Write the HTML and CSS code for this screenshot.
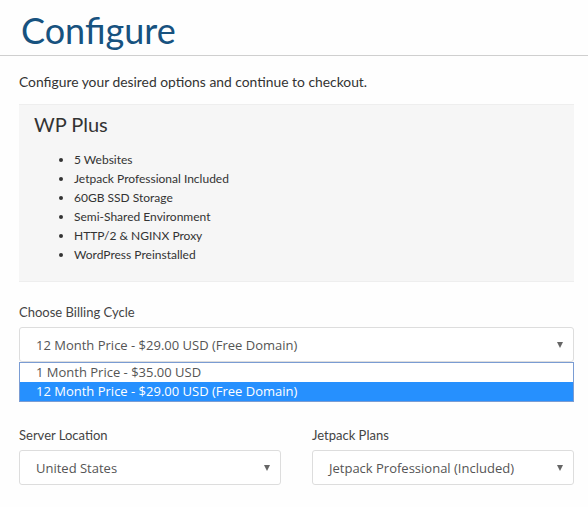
FILE: index.html
```html
<!DOCTYPE html>
<html>
<head>
<meta charset="utf-8">
<link rel="stylesheet" href="styles.css">
</head>
<body>
<div class="header">
  <h1 class="title">Configure</h1>
</div>
<div class="page">
  <p class="intro">Configure your desired options and continue to checkout.</p>
  <div class="product">
    <h2 class="product-name">WP Plus</h2>
    <ul class="features">
      <li>5 Websites</li>
      <li>Jetpack Professional Included</li>
      <li>60GB SSD Storage</li>
      <li>Semi-Shared Environment</li>
      <li>HTTP/2 &amp; NGINX Proxy</li>
      <li>WordPress Preinstalled</li>
    </ul>
  </div>

  <div class="field billing">
    <label class="label">Choose Billing Cycle</label>
    <div class="select-wrap">
      <div class="select">
        <span>12 Month Price - $29.00 USD (Free Domain)</span>
        <span class="arrow"></span>
      </div>
      <ul class="dropdown">
        <li class="opt">1 Month Price - $35.00 USD</li>
        <li class="opt active">12 Month Price - $29.00 USD (Free Domain)</li>
      </ul>
    </div>
  </div>

  <div class="row">
    <div class="field">
      <label class="label">Server Location</label>
      <div class="select">
        <span>United States</span>
        <span class="arrow"></span>
      </div>
    </div>
    <div class="field">
      <label class="label">Jetpack Plans</label>
      <div class="select">
        <span>Jetpack Professional (Included)</span>
        <span class="arrow"></span>
      </div>
    </div>
  </div>
</div>
</body>
</html>
```

FILE: styles.css
```css
html, body {
  margin: 0;
  padding: 0;
  background: #fefefe;
}
body {
  font-family: Lato, "Open Sans", sans-serif;
  color: #333;
}
.header {
  padding-left: 21px;
  border-bottom: 1px solid #cfcfcf;
  height: 55px;
}
.title {
  margin: 0;
  padding-top: 8px;
  font-size: 36px;
  font-weight: 400;
  line-height: 44px;
  color: #17527f;
}
.page {
  width: 555px;
  padding-left: 19px;
}
.intro {
  margin: 16px 0 0;
  font-size: 13.85px;
  line-height: 20px;
  color: #333;
}
.product {
  margin-top: 12px;
  height: 176px;
  background: #f6f6f6;
  border-top: 1px solid #eeeeee;
  border-bottom: 1px solid #eeeeee;
  padding: 0 15px;
}
.product-name {
  margin: 0;
  padding-top: 7px;
  font-size: 20px;
  font-weight: 400;
  line-height: 24px;
  color: #333;
}
.features {
  margin: 14px 0 0;
  padding-left: 40px;
  font-size: 12px;
  line-height: 19px;
  color: #333;
}
.field {
  display: flex;
  flex-direction: column;
}
.label {
  font-size: 13px;
  line-height: 18px;
  color: #444;
  margin-bottom: 6px;
}
.billing {
  margin-top: 21px;
}
.select-wrap {
  position: relative;
}
.select {
  height: 32px;
  border: 1px solid #dddddd;
  border-radius: 3px;
  background: #fff;
  display: flex;
  align-items: center;
  justify-content: space-between;
  padding: 1px 10px 0 16px;
  font-family: "Open Sans", sans-serif;
  font-size: 13px;
  color: #555;
}
.arrow {
  width: 0;
  height: 0;
  border-left: 3.5px solid transparent;
  border-right: 3.5px solid transparent;
  border-top: 6px solid #666;
}
.dropdown {
  position: absolute;
  left: 0;
  right: 0;
  top: 35px;
  margin: 0;
  padding: 0;
  list-style: none;
  border: 1px solid #7a9cd3;
  background: #fff;
  z-index: 2;
}
.opt {
  height: 19px;
  line-height: 19px;
  padding-left: 16px;
  font-family: "Open Sans", sans-serif;
  font-size: 13px;
  color: #555;
}
.opt.active {
  background: #2690fe;
  color: #fff;
}
.row {
  margin-top: 64px;
  display: grid;
  grid-template-columns: 262px 262px;
  column-gap: 31px;
}
```
